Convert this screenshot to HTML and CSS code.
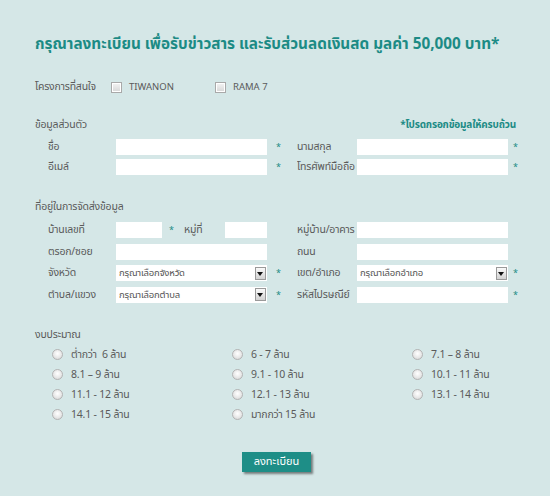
FILE: index.html
```html
<!DOCTYPE html>
<html lang="th">
<head>
<meta charset="utf-8">
<title>ลงทะเบียน</title>
<link rel="stylesheet" href="styles.css">
</head>
<body>
<div class="page">
  <h1 class="title">กรุณาลงทะเบียน เพื่อรับข่าวสาร และรับส่วนลดเงินสด มูลค่า 50,000 บาท*</h1>

  <div class="interest">
    <span class="interest-label">โครงการที่สนใจ</span>
    <label class="check-item"><span class="checkbox"></span><span class="latin">TIWANON</span></label>
    <label class="check-item"><span class="checkbox"></span><span class="latin">RAMA 7</span></label>
  </div>

  <div class="section-head">
    <span>ข้อมูลส่วนตัว</span>
    <span class="required-note">*โปรดกรอกข้อมูลให้ครบถ้วน</span>
  </div>
  <div class="grid grid-personal">
    <span class="lbl">ชื่อ</span><span class="input"></span><span class="star s1">*</span>
    <span class="lbl">นามสกุล</span><span class="input"></span><span class="star s2">*</span>
    <span class="lbl">อีเมล์</span><span class="input"></span><span class="star s1">*</span>
    <span class="lbl">โทรศัพท์มือถือ</span><span class="input"></span><span class="star s2">*</span>
  </div>

  <div class="section-head section-address">
    <span>ที่อยู่ในการจัดส่งข้อมูล</span>
  </div>
  <div class="grid grid-address">
    <span class="lbl">บ้านเลขที่</span>
    <span class="split">
      <span class="input input-house"></span><span class="star s-in">*</span><span class="lbl lbl-moo">หมู่ที่</span><span class="input input-moo"></span>
    </span><span></span>
    <span class="lbl">หมู่บ้าน/อาคาร</span><span class="input"></span><span></span>

    <span class="lbl">ตรอก/ซอย</span><span class="input"></span><span></span>
    <span class="lbl">ถนน</span><span class="input"></span><span></span>

    <span class="lbl">จังหวัด</span>
    <span class="select"><span class="select-text">กรุณาเลือกจังหวัด</span><span class="select-arrow"></span></span><span class="star s1">*</span>
    <span class="lbl">เขต/อำเภอ</span>
    <span class="select"><span class="select-text">กรุณาเลือกอำเภอ</span><span class="select-arrow"></span></span><span class="star s2">*</span>

    <span class="lbl">ตำบล/แขวง</span>
    <span class="select"><span class="select-text">กรุณาเลือกตำบล</span><span class="select-arrow"></span></span><span class="star s1">*</span>
    <span class="lbl">รหัสไปรษณีย์</span><span class="input"></span><span class="star s2">*</span>
  </div>

  <div class="section-head section-budget">
    <span>งบประมาณ</span>
  </div>
  <div class="radios">
    <label class="radio-item"><span class="radio"></span>ต่ำกว่า&nbsp; 6 ล้าน</label>
    <label class="radio-item"><span class="radio"></span>6 - 7 ล้าน</label>
    <label class="radio-item"><span class="radio"></span>7.1 – 8 ล้าน</label>
    <label class="radio-item"><span class="radio"></span>8.1 – 9 ล้าน</label>
    <label class="radio-item"><span class="radio"></span>9.1 - 10 ล้าน</label>
    <label class="radio-item"><span class="radio"></span>10.1 - 11 ล้าน</label>
    <label class="radio-item"><span class="radio"></span>11.1 - 12 ล้าน</label>
    <label class="radio-item"><span class="radio"></span>12.1 - 13 ล้าน</label>
    <label class="radio-item"><span class="radio"></span>13.1 - 14 ล้าน</label>
    <label class="radio-item"><span class="radio"></span>14.1 - 15 ล้าน</label>
    <label class="radio-item"><span class="radio"></span>มากกว่า 15 ล้าน</label>
  </div>

  <div class="submit-row">
    <button class="submit" type="button">ลงทะเบียน</button>
  </div>
</div>
</body>
</html>
```

FILE: styles.css
```css
html, body {
  margin: 0;
  padding: 0;
}
body {
  background: #d5e7e7;
  color: #5a5a5a;
  font-family: "Noto Sans Thai", "Noto Sans Thai UI", "Loma", "Garuda", "Noto Sans", "DejaVu Sans", sans-serif;
  font-size: 10.5px;
  letter-spacing: -0.2px;
  width: 550px;
  height: 496px;
  overflow: hidden;
}
.page {
  padding: 33px 34px 0 35px;
}
.title {
  margin: 0;
  font-size: 15.3px;
  line-height: 24px;
  font-weight: 700;
  letter-spacing: 0;
  color: #1c8b85;
  white-space: nowrap;
}
.interest {
  margin-top: 22px;
  display: flex;
  align-items: center;
  line-height: 16px;
  height: 16px;
}
.interest-label {
  width: 76px;
}
.check-item {
  display: flex;
  align-items: center;
  gap: 7px;
  width: 104px;
}
.latin {
  font-size: 9.5px;
  letter-spacing: 0;
}
.checkbox {
  width: 9px;
  height: 9px;
  border: 1px solid #a9a9a9;
  background: linear-gradient(#f4f4f4, #d6d6d6);
  box-shadow: inset 0 0 0 1px #ffffff;
}
.section-head {
  margin-top: 22px;
  display: flex;
  justify-content: space-between;
  line-height: 16px;
  height: 16px;
}
.required-note {
  color: #1c8b85;
  font-weight: 700;
  font-size: 10px;
}
.section-address,
.section-budget {
  margin-top: 24px;
}
.grid {
  display: grid;
  grid-template-columns: 68px 151px 30px 60px 151px 1fr;
  padding-left: 13px;
  align-items: center;
  line-height: 16px;
}
.grid-personal {
  margin-top: 6px;
  row-gap: 4px;
}
.grid-address {
  margin-top: 7px;
  row-gap: 5.67px;
}
.lbl {
  white-space: nowrap;
  overflow: hidden;
}
.input {
  display: block;
  height: 16px;
  background: #ffffff;
}
.star {
  color: #1c8b85;
  font-size: 9px;
  line-height: 16px;
}
.s1 { padding-left: 9px; }
.s2 { padding-left: 5px; }
.split {
  display: flex;
  align-items: center;
}
.input-house { width: 46px; }
.s-in { width: 22px; padding-left: 7px; box-sizing: border-box; }
.lbl-moo { width: 41px; }
.input-moo { flex: 1; }
.select {
  display: flex;
  align-items: center;
  justify-content: space-between;
  height: 16px;
  background: #ffffff;
  padding: 0 1px 0 3px;
}
.select-text {
  font-size: 9.5px;
  color: #555555;
}
.select-arrow {
  position: relative;
  width: 9px;
  height: 11px;
  border: 1px solid #9a9a9a;
  background: linear-gradient(#fafafa, #d2d2d2);
}
.select-arrow::after {
  content: "";
  position: absolute;
  left: 1px;
  top: 4px;
  border-left: 3.5px solid transparent;
  border-right: 3.5px solid transparent;
  border-top: 4px solid #111111;
}
.radios {
  margin-top: 2px;
  padding-left: 17px;
  display: grid;
  grid-template-columns: 180px 180px 1fr;
}
.radio-item {
  display: flex;
  align-items: center;
  height: 20px;
  gap: 8px;
}
.radio {
  width: 9px;
  height: 9px;
  border-radius: 50%;
  border: 1px solid #b4b4b4;
  background: radial-gradient(circle at 50% 40%, #ffffff 0, #e6e6e6 60%, #cfcfcf 100%);
}
.submit-row {
  margin-top: 27px;
  display: flex;
  justify-content: center;
  padding-left: 2px;
}
.submit {
  width: 69px;
  height: 20px;
  padding: 0;
  border: none;
  background: #1e8e87;
  color: #ffffff;
  font-family: inherit;
  font-size: 11px;
  letter-spacing: 0;
  line-height: 20px;
  box-shadow: 2px 2px 2px rgba(40, 40, 40, 0.55);
}
```
